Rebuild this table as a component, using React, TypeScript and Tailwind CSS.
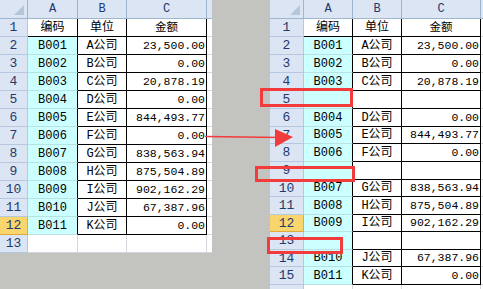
import React from "react";

type Row = { n: string; a: string; b: string; c: string; h: string; table: boolean; sel?: boolean };

const MONO = "font-['Liberation_Mono','Noto_Sans_CJK_SC',monospace]";

function Sheet({ cols, rows }: { cols: string[]; rows: Row[] }) {
  return (
    <div className="flex flex-col bg-white">
      <div className="flex h-[19px] bg-[#dbe5f3] border-b border-[#9eb6ce]">
        <div className={`${cols[0]} relative border-r border-[#9eb6ce] h-full`}>
          <div className="absolute right-[3px] bottom-[3px] w-0 h-0 border-l-[10px] border-l-transparent border-b-[10px] border-b-[#b7c5d8]" />
        </div>
        {["A", "B", "C"].map((l, i) => (
          <div
            key={l}
            className={`${cols[i + 1]} border-r border-[#9eb6ce] flex items-center justify-center text-[12px] text-[#1f3a6e] ${MONO}`}
          >
            {l}
          </div>
        ))}
        <div className={`${cols[4]}`} />
      </div>
      {rows.map((r, idx) => (
        <div key={idx} className={`flex ${r.h}`}>
          <div
            className={`${cols[0]} ${
              r.sel ? "bg-[#f9d56e] border-[#e2a93b]" : "bg-[#dbe5f3] border-[#b5c8e0]"
            } border-b border-r flex items-center justify-center text-[13px] leading-none text-[#1f3a6e] ${MONO}`}
          >
            {r.n}
          </div>
          {r.table ? (
            <>
              <div
                className={`${cols[1]} ${
                  r.n === "1" ? "bg-white border-b-black" : "bg-[#ccffff] border-b-[#b9e3e3]"
                } border-b border-r border-r-black flex items-center justify-center text-[12px] leading-none text-black ${MONO}`}
              >
                {r.a}
              </div>
              <div
                className={`${cols[2]} bg-white border-b border-r border-black flex items-center justify-center text-[12px] leading-none text-black ${MONO}`}
              >
                {r.b}
              </div>
              <div
                className={`${cols[3]} bg-white border-b border-r border-black flex items-center ${
                  r.n === "1" ? "justify-center" : "justify-end pr-[1px]"
                } text-[11.5px] leading-none text-black ${MONO}`}
              >
                {r.c}
              </div>
            </>
          ) : (
            <>
              <div className={`${cols[1]} bg-white border-b border-r border-[#d4d8de]`} />
              <div className={`${cols[2]} bg-white border-b border-r border-[#d4d8de]`} />
              <div className={`${cols[3]} bg-white border-b border-r border-[#d4d8de]`} />
            </>
          )}
          <div className={`${cols[4]} bg-white border-b border-[#d4d8de]`} />
        </div>
      ))}
    </div>
  );
}

const leftData: [string, string, string][] = [
  ["编码", "单位", "金额"],
  ["B001", "A公司", "23,500.00"],
  ["B002", "B公司", "0.00"],
  ["B003", "C公司", "20,878.19"],
  ["B004", "D公司", "0.00"],
  ["B005", "E公司", "844,493.77"],
  ["B006", "F公司", "0.00"],
  ["B007", "G公司", "838,563.94"],
  ["B008", "H公司", "875,504.89"],
  ["B009", "I公司", "902,162.29"],
  ["B010", "J公司", "67,387.96"],
  ["B011", "K公司", "0.00"],
];

const leftRows: Row[] = [
  ...leftData.map((d, i) => ({
    n: String(i + 1),
    a: d[0],
    b: d[1],
    c: d[2],
    h: "h-[18px]",
    table: true,
    sel: i + 1 === 12,
  })),
  { n: "13", a: "", b: "", c: "", h: "h-[18px]", table: false },
];

const rightData: [string, string, string][] = [
  ["编码", "单位", "金额"],
  ["B001", "A公司", "23,500.00"],
  ["B002", "B公司", "0.00"],
  ["B003", "C公司", "20,878.19"],
  ["", "", ""],
  ["B004", "D公司", "0.00"],
  ["B005", "E公司", "844,493.77"],
  ["B006", "F公司", "0.00"],
  ["", "", ""],
  ["B007", "G公司", "838,563.94"],
  ["B008", "H公司", "875,504.89"],
  ["B009", "I公司", "902,162.29"],
  ["", "", ""],
  ["B010", "J公司", "67,387.96"],
  ["B011", "K公司", "0.00"],
];

const rightHeights = [
  "h-[18px]", "h-[18px]", "h-[18px]", "h-[18px]", "h-[18px]", "h-[18px]",
  "h-[17px]", "h-[18px]", "h-[18px]", "h-[17px]", "h-[18px]", "h-[17px]",
  "h-[18px]", "h-[17px]", "h-[18px]",
];

const rightRows: Row[] = [
  ...rightData.map((d, i) => ({
    n: String(i + 1),
    a: d[0],
    b: d[1],
    c: d[2],
    h: rightHeights[i],
    table: true,
    sel: i + 1 === 12,
  })),
  { n: "", a: "", b: "", c: "", h: "h-[18px]", table: false },
];

export default function App() {
  return (
    <div className="relative w-[483px] h-[289px] overflow-hidden bg-[#c3c3c0] flex items-start">
      <div className="w-[212px] h-[253px] overflow-hidden shrink-0">
        <Sheet cols={["w-[28px]", "w-[50px]", "w-[49px]", "w-[80px]", "w-[5px]"]} rows={leftRows} />
      </div>
      <div className="w-[58px] shrink-0" />
      <div className="w-[213px] h-[289px] overflow-hidden shrink-0">
        <Sheet cols={["w-[34px]", "w-[49px]", "w-[49px]", "w-[79px]", "w-[2px]"]} rows={rightRows} />
      </div>

      <div className="absolute left-[260px] top-[88px] w-[93px] h-[19px] border-[3px] border-[#f23c3c]" />
      <div className="absolute left-[255px] top-[166px] w-[100px] h-[16px] border-[3px] border-[#f23c3c]" />
      <div className="absolute left-[267px] top-[237px] w-[76px] h-[17px] border-[3px] border-[#f23c3c]" />
      <svg className="absolute left-0 top-0" width="483" height="289" viewBox="0 0 483 289">
        <line x1="205" y1="136.5" x2="280" y2="137.5" stroke="#f23c3c" strokeWidth="1.6" />
        <polygon points="275,129 293,137 275,147" fill="#f23c3c" />
      </svg>
    </div>
  );
}
